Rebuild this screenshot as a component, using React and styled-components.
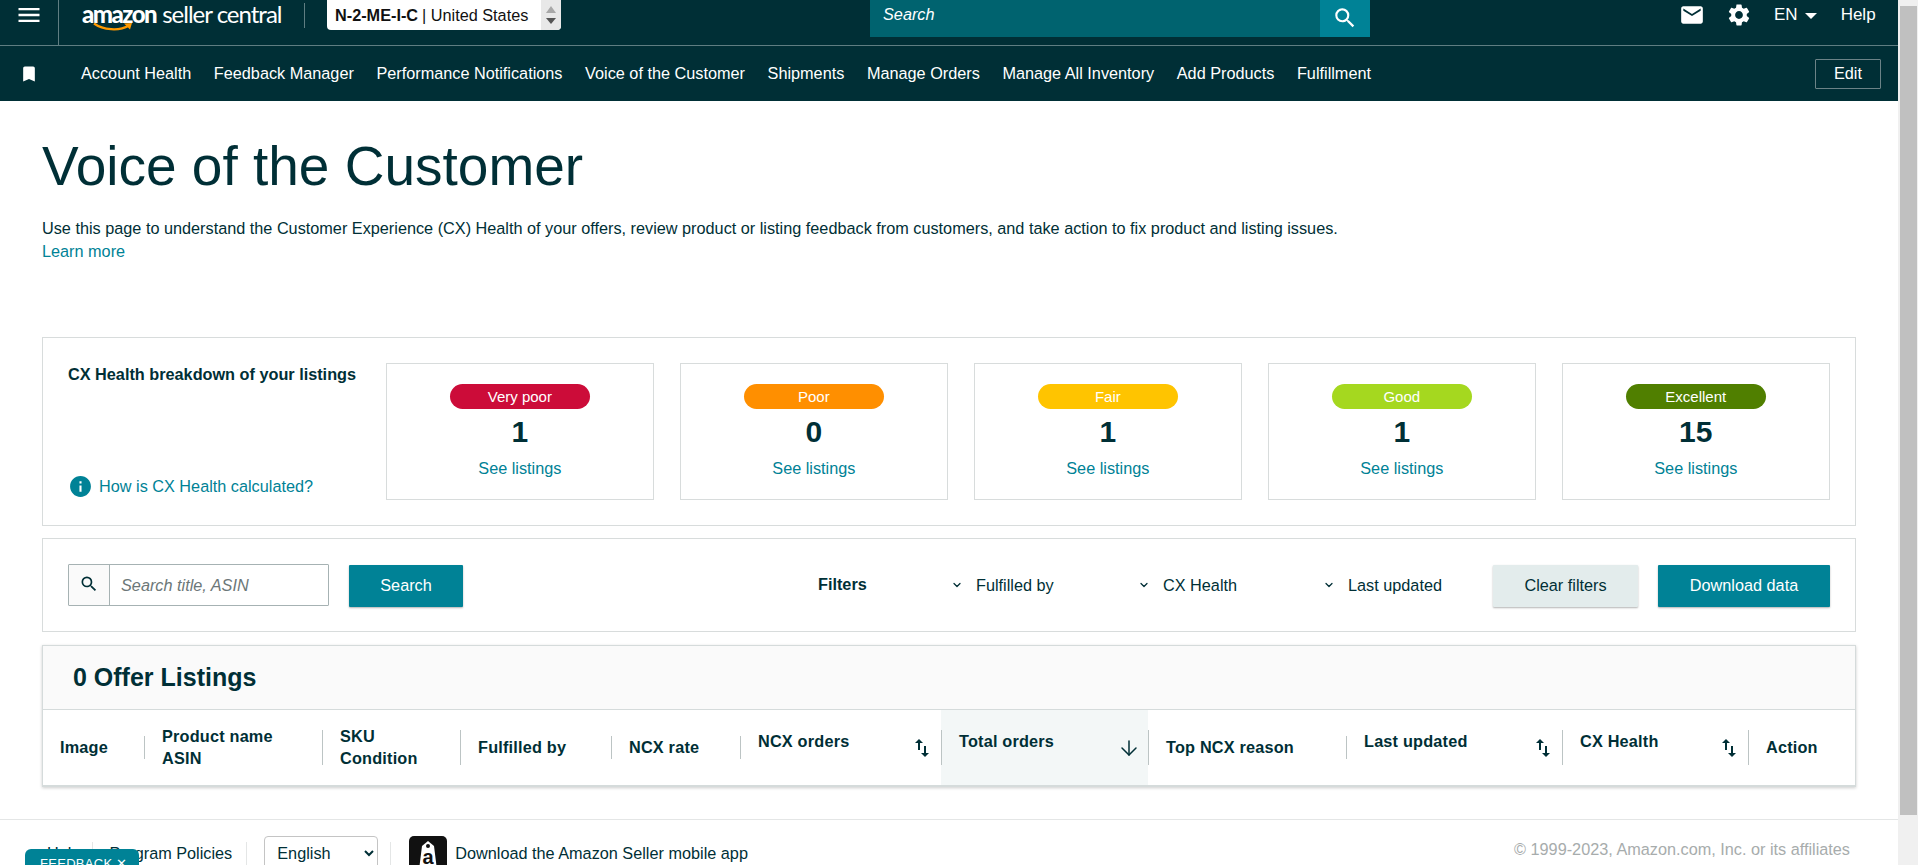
import React from "react";
import styled, { createGlobalStyle } from "styled-components";
import { MdMenu, MdSearch, MdEmail, MdSettings, MdBookmark, MdInfo, MdSwapVert } from "react-icons/md";
import { ArrowDown, ChevronDown } from "lucide-react";

const GlobalStyle = createGlobalStyle`
  html, body {
    margin: 0;
    padding: 0;
    height: 865px;
    overflow: hidden;
    background: #fff;
    font-family: "Liberation Sans", Arial, sans-serif;
    font-size: 16.25px;
    color: #002f36;
  }
  * { box-sizing: border-box; }
`;

const Page = styled.div`
  position: relative;
  display: flex;
  width: 100%;
  height: 865px;
  overflow: hidden;
`;

const Main = styled.div`
  flex: 1;
  min-width: 0;
  overflow: hidden;
`;

const ScrollTrack = styled.div`
  flex: none;
  width: 20px;
  padding: 6px 1px 0 2px;
  background: #f0f0f0;
`;

const ScrollThumb = styled.div`
  height: 809px;
  background: #c0c0c0;
`;

const TopBar = styled.header`
  display: flex;
  align-items: flex-start;
  height: 46px;
  background: #002f36;
  border-bottom: 1px solid #5f7e82;
  color: #fff;
`;

const MenuButton = styled.div`
  flex: none;
  display: flex;
  justify-content: center;
  width: 59px;
  height: 45px;
  padding-top: 1px;
  border-right: 1px solid #5f7e82;
  font-size: 28px;
`;

const Logo = styled.div`
  flex: none;
  display: flex;
  flex-direction: column;
  width: 222px;
  margin-left: 23px;
  padding-top: 1px;
`;

const LogoText = styled.div`
  font-family: Lato, sans-serif;
  font-size: 24px;
  line-height: 26px;
  letter-spacing: -1px;
  white-space: nowrap;
  font-weight: 400;
  b {
    font-weight: 900;
    margin-right: 6px;
    letter-spacing: -1.5px;
  }
`;

const Smile = styled.svg`
  display: block;
  width: 40px;
  height: 10px;
  margin: -5px 0 0 11px;
`;

const HeadDivider = styled.div`
  flex: none;
  width: 1px;
  height: 25px;
  margin: 3px 22px 0 0;
  background: #5f7e82;
`;

const AccountSwitch = styled.div`
  flex: none;
  display: flex;
  align-items: center;
  width: 234px;
  height: 30px;
  padding-left: 8px;
  background: #fff;
  border-radius: 0 0 4px 4px;
  color: #111;
  white-space: nowrap;
  b { margin-right: 4px; }
`;

const Stepper = styled.div`
  display: flex;
  flex-direction: column;
  align-items: center;
  justify-content: center;
  gap: 5px;
  flex: none;
  width: 20px;
  height: 30px;
  margin-left: auto;
  background: #e8e8e8;
  border-radius: 0 0 4px 0;
`;

const StepArrow = styled.span`
  width: 0;
  height: 0;
  border-left: 5px solid transparent;
  border-right: 5px solid transparent;
  ${(p) => (p.$up ? "border-bottom: 7px solid #a8a8a8;" : "border-top: 6px solid #555;")}
`;

const TopSearch = styled.div`
  flex: none;
  display: flex;
  width: 500px;
  height: 37px;
  margin-left: 309px;
  background: #00636f;
`;

const TopSearchText = styled.div`
  flex: 1;
  padding: 5px 13px;
  font-style: italic;
  line-height: 18px;
`;

const TopSearchButton = styled.div`
  flex: none;
  display: flex;
  align-items: center;
  justify-content: center;
  padding-bottom: 2px;
  width: 50px;
  background: #008296;
  font-size: 26px;
`;

const TopRight = styled.div`
  flex: none;
  display: flex;
  align-items: center;
  height: 30px;
  margin-left: 309px;
  font-size: 17px;
`;

const TopIcon = styled.span`
  display: flex;
  font-size: 26px;
  margin-right: ${(p) => p.$gap}px;
`;

const Caret = styled.span`
  width: 0;
  height: 0;
  margin: 2px 24px 0 7px;
  border-left: 6px solid transparent;
  border-right: 6px solid transparent;
  border-top: 6px solid #fff;
`;

const NavBar = styled.nav`
  display: flex;
  align-items: center;
  height: 55px;
  background: #002f36;
  color: #fff;
`;

const NavPin = styled.span`
  display: flex;
  width: 81px;
  padding-left: 19px;
  font-size: 20px;
`;

const NavItem = styled.a`
  margin-right: 22.6px;
  white-space: nowrap;
`;

const EditButton = styled.div`
  display: flex;
  align-items: center;
  justify-content: center;
  width: 66px;
  height: 30px;
  margin-left: auto;
  margin-right: 17px;
  border: 1px solid #6c8387;
  border-radius: 1px;
`;

const Content = styled.main`
  padding: 33px 42px 0 42px;
`;

const Title = styled.h1`
  margin: 0;
  font-size: 55px;
  line-height: 64px;
  font-weight: 400;
  color: #002f36;
`;

const Intro = styled.p`
  margin: 18px 0 0;
  line-height: 24px;
  color: #002f36;
`;

const TextLink = styled.a`
  display: ${(p) => (p.$block ? "block" : "inline")};
  margin-top: ${(p) => (p.$block ? -1 : 0)}px;
  color: #008296;
  line-height: 24px;
`;

const HealthPanel = styled.section`
  display: flex;
  margin-top: 74px;
  padding: 25px 25px 25px 25px;
  border: 1px solid #d8dcdc;
`;

const HealthIntro = styled.div`
  flex: 1;
  display: flex;
  flex-direction: column;
  justify-content: space-between;
  padding-bottom: 1px;
`;

const HealthTitle = styled.div`
  font-weight: 700;
  line-height: 22px;
`;

const HowLink = styled.div`
  display: flex;
  align-items: center;
  gap: 6px;
  color: #008296;
  svg { font-size: 25px; }
`;

const Cards = styled.div`
  flex: none;
  display: flex;
  gap: 25.6px;
`;

const Card = styled.div`
  display: flex;
  flex-direction: column;
  align-items: center;
  width: 268.4px;
  height: 137px;
  padding-top: 20px;
  border: 1px solid #d8dcdc;
`;

const Badge = styled.div`
  width: 140px;
  height: 25px;
  border-radius: 13px;
  background: ${(p) => p.$color};
  color: #fff;
  font-size: 15px;
  line-height: 25px;
  text-align: center;
`;

const Count = styled.div`
  margin: 5px 0 6px;
  font-size: 30px;
  line-height: 36px;
  font-weight: 700;
`;

const FilterPanel = styled.section`
  display: flex;
  align-items: center;
  height: 94px;
  margin-top: 12px;
  padding: 0 25px 0 25px;
  border: 1px solid #d8dcdc;
`;

const SearchBox = styled.div`
  flex: none;
  display: flex;
  width: 261px;
  height: 42px;
  border: 1px solid #a6b2b3;
  border-radius: 1px;
`;

const SearchGlyph = styled.div`
  flex: none;
  display: flex;
  align-items: center;
  justify-content: center;
  width: 41px;
  padding-bottom: 2px;
  background: #fafafa;
  border-right: 1px solid #a6b2b3;
  font-size: 20px;
`;

const SearchInput = styled.input`
  flex: 1;
  min-width: 0;
  padding: 0 11px;
  border: 0;
  outline: 0;
  font: italic 16.25px "Liberation Sans", Arial, sans-serif;
  &::placeholder { color: #6c7778; opacity: 1; }
`;

const Button = styled.div`
  flex: none;
  display: flex;
  align-items: center;
  justify-content: center;
  width: ${(p) => p.$width}px;
  height: 42px;
  margin-top: 2px;
  margin-left: ${(p) => p.$gap}px;
  padding-bottom: 2px;
  background: ${(p) => (p.$plain ? "#e3ecec" : "#008296")};
  color: ${(p) => (p.$plain ? "#002f36" : "#fff")};
  border-radius: 1px;
  box-shadow: 0 1px 2px rgba(0, 0, 0, 0.3);
`;

const FiltersLabel = styled.div`
  flex: none;
  width: 133px;
  margin: 0 0 2px 355px;
  font-weight: 700;
`;

const FilterSelect = styled.div`
  flex: none;
  display: flex;
  align-items: center;
  gap: 13px;
  width: ${(p) => p.$width}px;
  svg { stroke-width: 2.5; }
`;

const ListingsPanel = styled.section`
  margin-top: 13px;
  border: 1px solid #d5dbdb;
  border-bottom: 2px solid #d5dbdb;
  box-shadow: 0 1px 3px rgba(0, 0, 0, 0.2);
`;

const ListingsHead = styled.div`
  height: 64px;
  padding-left: 30px;
  background: #fafafa;
  border-bottom: 1px solid #d5dbdb;
  font-size: 25px;
  font-weight: 700;
  line-height: 62px;
`;

const ColumnRow = styled.div`
  display: grid;
  grid-template-columns: 101px 178px 138px 151px 129px 201px 207px 198px 216px 186px 108px;
  height: 75px;
`;

const Column = styled.div`
  display: flex;
  align-items: center;
  background: ${(p) => (p.$active ? "#f3f7f7" : "transparent")};
`;

const ColumnDivider = styled.div`
  flex: none;
  width: 1px;
  height: ${(p) => (p.$tall ? 35 : 23)}px;
  margin-right: 17px;
  background: #bcc4c4;
`;

const ImageGutter = styled.div`
  flex: none;
  width: 17px;
`;

const ColumnLabel = styled.div`
  flex: 1;
  font-weight: 700;
  line-height: 22px;
  letter-spacing: 0.2px;
  padding-bottom: ${(p) => (p.$sort ? 14 : 2)}px;
`;

const SortGlyph = styled.span`
  flex: none;
  display: flex;
  margin-right: 7px;
  font-size: 24px;
`;

const Footer = styled.footer`
  display: flex;
  align-items: flex-start;
  height: 60px;
  margin-top: 32px;
  padding: 16px 48px 0 47px;
  border-top: 1px solid #e4e6e6;
`;

const FooterLink = styled.div`
  flex: none;
  margin-top: 5px;
  line-height: 24px;
  white-space: nowrap;
  color: #002f36;
`;

const FooterDivider = styled.div`
  flex: none;
  width: 1px;
  height: 30px;
  margin: 6px ${(p) => p.$right}px 0 ${(p) => p.$left}px;
  background: #e4e6e6;
`;

const LanguageSelect = styled.select`
  flex: none;
  width: 114px;
  height: 34px;
  padding-left: 8px;
  background: #fff;
  border: 1px solid #c4c4c4;
  border-radius: 4px;
  color: #002f36;
  font: 16.25px "Liberation Sans", Arial, sans-serif;
`;

const AppBadge = styled.svg`
  flex: none;
  display: block;
  width: 38px;
  height: 38px;
  margin-right: 8px;
`;

const Copyright = styled.div`
  margin: 1px 0 0 auto;
  line-height: 24px;
  color: #a7acac;
  white-space: nowrap;
`;

const FeedbackTab = styled.div`
  position: absolute;
  left: 25px;
  top: 849px;
  width: 114px;
  height: 30px;
  padding: 7px 0 0 15px;
  background: #008296;
  border-radius: 6px 6px 0 0;
  color: #fff;
  font-size: 13px;
  letter-spacing: 0.3px;
  white-space: nowrap;
`;

const navLinks = [
  "Account Health",
  "Feedback Manager",
  "Performance Notifications",
  "Voice of the Customer",
  "Shipments",
  "Manage Orders",
  "Manage All Inventory",
  "Add Products",
  "Fulfillment",
];

const healthCards = [
  { label: "Very poor", color: "#cc0c39", count: 1 },
  { label: "Poor", color: "#ff8f00", count: 0 },
  { label: "Fair", color: "#ffc400", count: 1 },
  { label: "Good", color: "#a5d81f", count: 1 },
  { label: "Excellent", color: "#507f00", count: 15 },
];

const filters = [
  { label: "Fulfilled by", width: 187 },
  { label: "CX Health", width: 185 },
  { label: "Last updated", width: 170 },
];

const columns = [
  { label: "Image", noDivider: true },
  { label: ["Product name", "ASIN"] },
  { label: ["SKU", "Condition"], tall: true },
  { label: "Fulfilled by", tall: true },
  { label: "NCX rate" },
  { label: "NCX orders", sort: true },
  { label: "Total orders", sort: true, active: true, tall: true },
  { label: "Top NCX reason", tall: true },
  { label: "Last updated", sort: true },
  { label: "CX Health", sort: true, tall: true },
  { label: "Action", tall: true },
];

function HeaderColumn({ col }) {
  const text = Array.isArray(col.label)
    ? col.label.map((line) => <div key={line}>{line}</div>)
    : col.label;
  return (
    <Column $active={col.active}>
      {col.noDivider ? <ImageGutter /> : <ColumnDivider $tall={col.tall} />}
      <ColumnLabel $sort={col.sort}>{text}</ColumnLabel>
      {col.sort && (
        <SortGlyph>
          {col.active ? <ArrowDown size={24} strokeWidth={1.5} /> : <MdSwapVert />}
        </SortGlyph>
      )}
    </Column>
  );
}

export default function App() {
  return (
    <Page>
      <GlobalStyle />
      <Main>
        <TopBar>
          <MenuButton>
            <MdMenu />
          </MenuButton>
          <Logo>
            <LogoText>
              <b>amazon</b>seller central
            </LogoText>
            <Smile viewBox="0 0 40 10">
              <path d="M1 1.5C10 8 26 9.5 36 3.5" fill="none" stroke="#f90" strokeWidth="2.2" />
              <path d="M31 1.5L39 1L37 7.5" fill="#f90" />
            </Smile>
          </Logo>
          <HeadDivider />
          <AccountSwitch>
            <b>N-2-ME-I-C</b> | United States
            <Stepper>
              <StepArrow $up />
              <StepArrow />
            </Stepper>
          </AccountSwitch>
          <TopSearch>
            <TopSearchText>Search</TopSearchText>
            <TopSearchButton>
              <MdSearch />
            </TopSearchButton>
          </TopSearch>
          <TopRight>
            <TopIcon $gap={21}>
              <MdEmail />
            </TopIcon>
            <TopIcon $gap={22}>
              <MdSettings />
            </TopIcon>
            EN
            <Caret />
            Help
          </TopRight>
        </TopBar>
        <NavBar>
          <NavPin>
            <MdBookmark />
          </NavPin>
          {navLinks.map((link) => (
            <NavItem key={link}>{link}</NavItem>
          ))}
          <EditButton>Edit</EditButton>
        </NavBar>
        <Content>
          <Title>Voice of the Customer</Title>
          <Intro>
            Use this page to understand the Customer Experience (CX) Health of your offers, review
            product or listing feedback from customers, and take action to fix product and listing
            issues.
            <TextLink $block>Learn more</TextLink>
          </Intro>
          <HealthPanel>
            <HealthIntro>
              <HealthTitle>CX Health breakdown of your listings</HealthTitle>
              <HowLink>
                <MdInfo />
                How is CX Health calculated?
              </HowLink>
            </HealthIntro>
            <Cards>
              {healthCards.map((card) => (
                <Card key={card.label}>
                  <Badge $color={card.color}>{card.label}</Badge>
                  <Count>{card.count}</Count>
                  <TextLink>See listings</TextLink>
                </Card>
              ))}
            </Cards>
          </HealthPanel>
          <FilterPanel>
            <SearchBox>
              <SearchGlyph>
                <MdSearch />
              </SearchGlyph>
              <SearchInput placeholder="Search title, ASIN" />
            </SearchBox>
            <Button $width={114} $gap={20}>
              Search
            </Button>
            <FiltersLabel>Filters</FiltersLabel>
            {filters.map((filter) => (
              <FilterSelect key={filter.label} $width={filter.width}>
                <ChevronDown size={12} />
                {filter.label}
              </FilterSelect>
            ))}
            <Button $width={145} $gap={0} $plain>
              Clear filters
            </Button>
            <Button $width={172} $gap={20}>
              Download data
            </Button>
          </FilterPanel>
          <ListingsPanel>
            <ListingsHead>0 Offer Listings</ListingsHead>
            <ColumnRow>
              {columns.map((col) => (
                <HeaderColumn key={String(col.label)} col={col} />
              ))}
            </ColumnRow>
          </ListingsPanel>
        </Content>
        <Footer>
          <FooterLink>Help</FooterLink>
          <FooterDivider $left={12} $right={16} />
          <FooterLink>Program Policies</FooterLink>
          <FooterDivider $left={14} $right={17} />
          <LanguageSelect defaultValue="English">
            <option>English</option>
          </LanguageSelect>
          <FooterDivider $left={12} $right={18} />
          <AppBadge viewBox="0 0 38 38">
            <rect width="38" height="38" rx="5" fill="#111" />
            <path d="M13 10L19 5L25 10L28 34H10Z" fill="#fff" />
            <circle cx="19" cy="10" r="2" fill="#111" />
            <text x="19" y="28" fontSize="20" fontWeight="700" textAnchor="middle" fill="#111" fontFamily="Liberation Sans">
              a
            </text>
          </AppBadge>
          <FooterLink>Download the Amazon Seller mobile app</FooterLink>
          <Copyright>© 1999-2023, Amazon.com, Inc. or its affiliates</Copyright>
        </Footer>
      </Main>
      <ScrollTrack>
        <ScrollThumb />
      </ScrollTrack>
      <FeedbackTab>FEEDBACK ✕</FeedbackTab>
    </Page>
  );
}
